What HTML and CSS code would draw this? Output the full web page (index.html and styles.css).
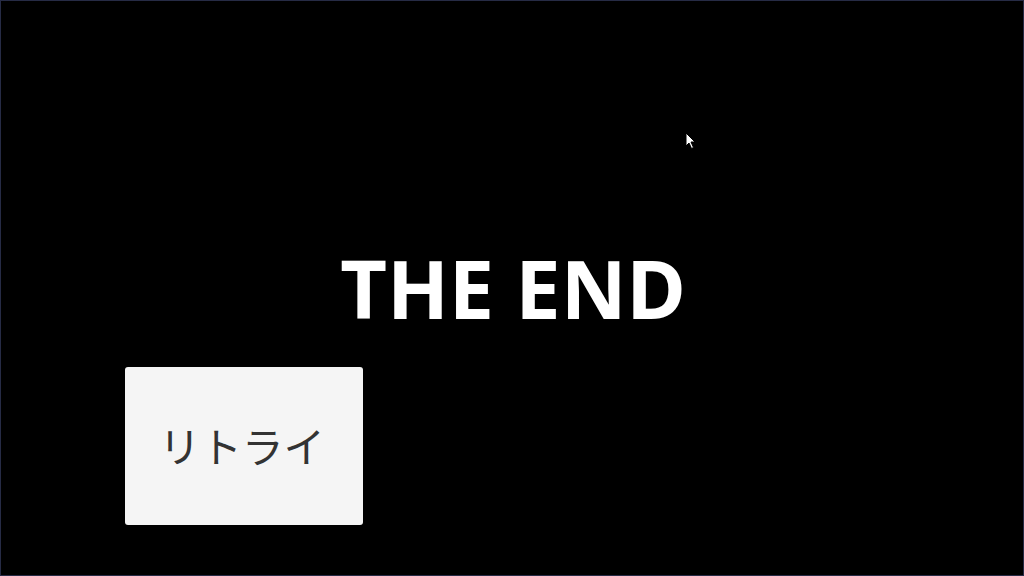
FILE: index.html
```html
<!DOCTYPE html>
<html lang="ja">
<head>
<meta charset="utf-8">
<link rel="stylesheet" href="styles.css">
</head>
<body>
<div class="screen">
  <h1 class="title">THE END</h1>
  <button class="retry">リトライ</button>
  <svg class="cursor" width="12" height="18" viewBox="0 0 12 18"><path d="M1 1 L1 14 L4 11 L6.5 16.5 L8.5 15.5 L6 10 L10 10 Z" fill="#fff" stroke="#000" stroke-width="1"/></svg>
</div>
</body>
</html>
```
FILE: styles.css
```css
html, body { margin: 0; padding: 0; background: #000; }
.screen {
  position: relative;
  width: 1024px;
  height: 576px;
  box-sizing: border-box;
  border: 1px solid #262b45;
  background: #000;
  padding-top: 247px;
  display: flex;
  flex-direction: column;
}
.title {
  margin: 0;
  font-family: "Noto Sans", sans-serif;
  font-weight: 700;
  font-size: 81px;
  line-height: 80px;
  color: #fff;
  text-align: center;
  padding-left: 2px;
}
.retry {
  margin: 39px 0 0 124px;
  width: 238px;
  height: 158px;
  background: #f5f5f5;
  border: none;
  border-radius: 3px;
  font-family: "Noto Sans CJK JP", sans-serif;
  font-size: 41.5px;
  color: #333;
  padding: 0 4px 2px 0;
  display: flex;
  align-items: center;
  justify-content: center;
}
.cursor { position: absolute; left: 684px; top: 131px; }
```
